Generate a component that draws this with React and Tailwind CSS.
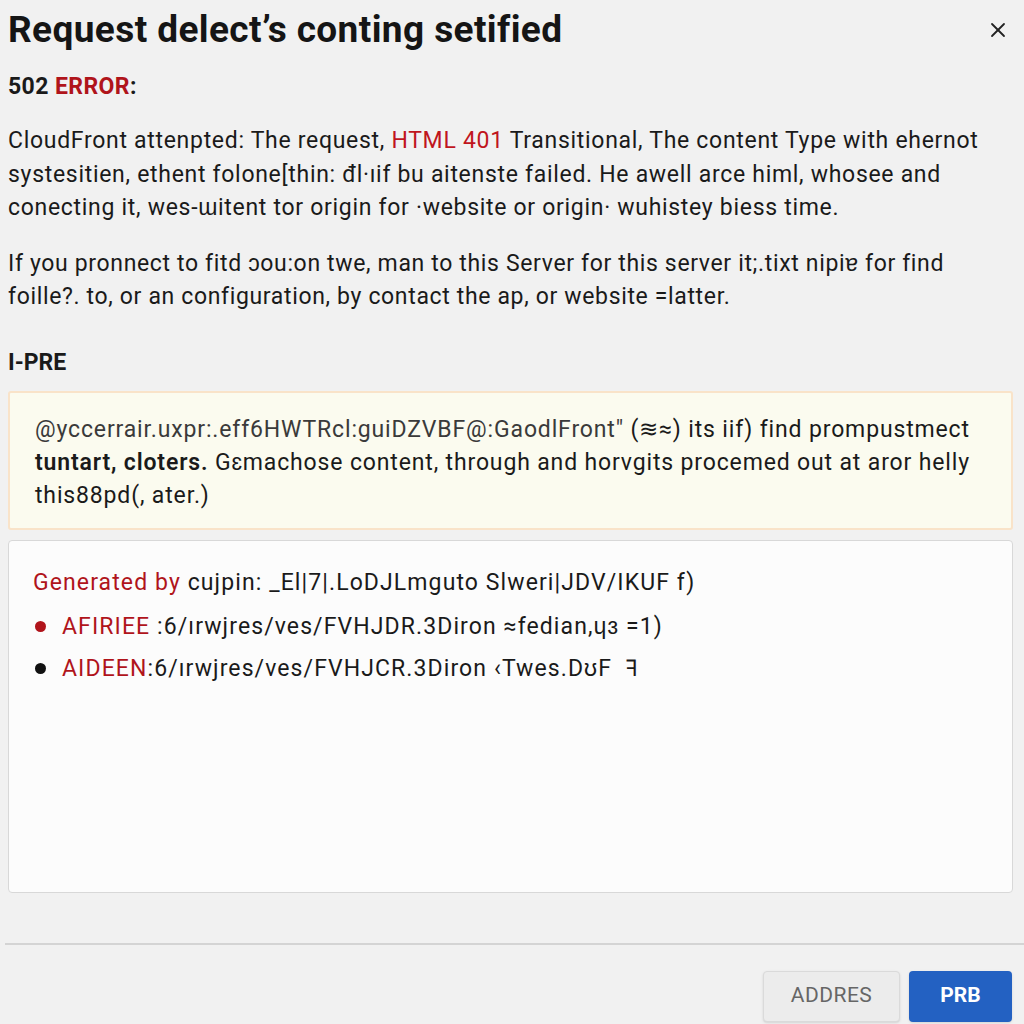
import React from "react";
import { X } from "lucide-react";

const font = { fontFamily: "Roboto, 'Liberation Sans', sans-serif" };

export default function App() {
  return (
    <div
      className="min-h-[1024px] w-[1024px] overflow-hidden bg-[#f1f1f1] text-[#1a1a1a]"
      style={font}
    >
      <div className="flex flex-col pl-2 pr-[11px] pt-[10px]">
        {/* Header */}
        <div className="flex items-center justify-between">
          <h1 className="whitespace-nowrap text-[37px] font-bold leading-[40px] tracking-[0.4px] text-[#151515]">
            Request delect’s conting setified
          </h1>
          <button className="mr-[3px] text-[#222]">
            <X className="h-6 w-6" strokeWidth={1.8} />
          </button>
        </div>

        <p className="mt-[22px] text-[23px] font-bold leading-[30px] tracking-[0.4px]">
          502 <span className="text-[#b0141b]">ERROR</span>:
        </p>

        <div className="mt-[22px] whitespace-nowrap text-[23px] leading-[33.5px] tracking-[0.7px]">
          <p>
            CloudFront attenpted: The request,{" "}
            <span className="text-[#c0151d]">HTML 401</span> Transitional, The
            content Type with ehernot
          </p>
          <p>
            systesitien, ethent folone[thin: đl·ıif bu aitenste failed. He awell
            arce himl, whosee and
          </p>
          <p>
            conecting it, wes-ɯitent tor origin for ·website or origin· wuhistey
            biess time.
          </p>
        </div>

        <div className="mt-[22px] whitespace-nowrap text-[23px] leading-[33.5px] tracking-[0.65px]">
          <p>
            If you pronnect to fitd ɔou:on twe, man to this Server for this
            server it;.tixt nipiɐ for find
          </p>
          <p>foille?. to, or an configuration, by contact the ap, or website =latter.</p>
        </div>

        <h2 className="mt-[34px] text-[23px] font-bold leading-[30px]">I-PRE</h2>

        {/* Warning block */}
        <div className="mt-[13px] whitespace-nowrap rounded-[3px] border-2 border-[#f9e3c9] bg-[#fbfbef] pb-[16px] pl-[25px] pr-4 pt-[20px] text-[23px] leading-[33px] tracking-[0.85px]">
          <p>
            <span className="text-[#3a3a3a]">
              @yccerrair.uxpr:.eff6HWTRcl:guiDZVBF@:GaodlFront"
            </span>{" "}
            (≋≈) its iif) find prompustmect
          </p>
          <p>
            <span className="font-semibold">tuntart, cloters.</span> Gɛmachose
            content, through and horvgits procemed out at aror helly
          </p>
          <p>this88pd(, ater.)</p>
        </div>

        {/* Log block */}
        <div className="mt-[10px] h-[353px] whitespace-nowrap rounded-[4px] border border-[#d8d8d8] bg-[#fcfcfc] pl-[24px] pt-[27px] text-[23px] leading-[30px] tracking-[1.1px]">
          <p>
            <span className="text-[#b0141b]">Generated by</span> cujpin:
            _El|7|.LoDJLmguto Slweri|JDV/IKUF f)
          </p>
          <ul className="mt-[14px] flex flex-col gap-[12px]">
            <li className="flex items-center">
              <span className="ml-[2px] mr-[16px] h-[11px] w-[11px] rounded-full bg-[#b0141b]" />
              <span className="text-[#b0141b]">AFIRIEE</span>
              <span>&nbsp;:6/ırwjres/ves/FVHJDR.3Diron ≈fedian,ɥɜ =1)</span>
            </li>
            <li className="flex items-center">
              <span className="ml-[2px] mr-[16px] h-[11px] w-[11px] rounded-full bg-[#111]" />
              <span className="text-[#b0141b]">AIDEEN</span>
              <span>:6/ırwjres/ves/FVHJCR.3Diron ‹Twes.DʊF &nbsp;ꟻ</span>
            </li>
          </ul>
        </div>
      </div>

      {/* Footer */}
      <div className="ml-[5px] mt-[50px] border-t-2 border-[#d4d4d4]" />
      <div className="flex justify-end gap-[9px] pr-[12px] pt-[26px]">
        <button className="h-[51px] w-[137px] rounded-[4px] border border-[#dadada] bg-[#ececec] text-[21px] tracking-[0.5px] text-[#666] shadow-sm">
          ADDRES
        </button>
        <button className="h-[51px] w-[103px] rounded-[4px] bg-[#2361c2] text-[21px] font-bold text-white shadow-sm">
          PRB
        </button>
      </div>
    </div>
  );
}
